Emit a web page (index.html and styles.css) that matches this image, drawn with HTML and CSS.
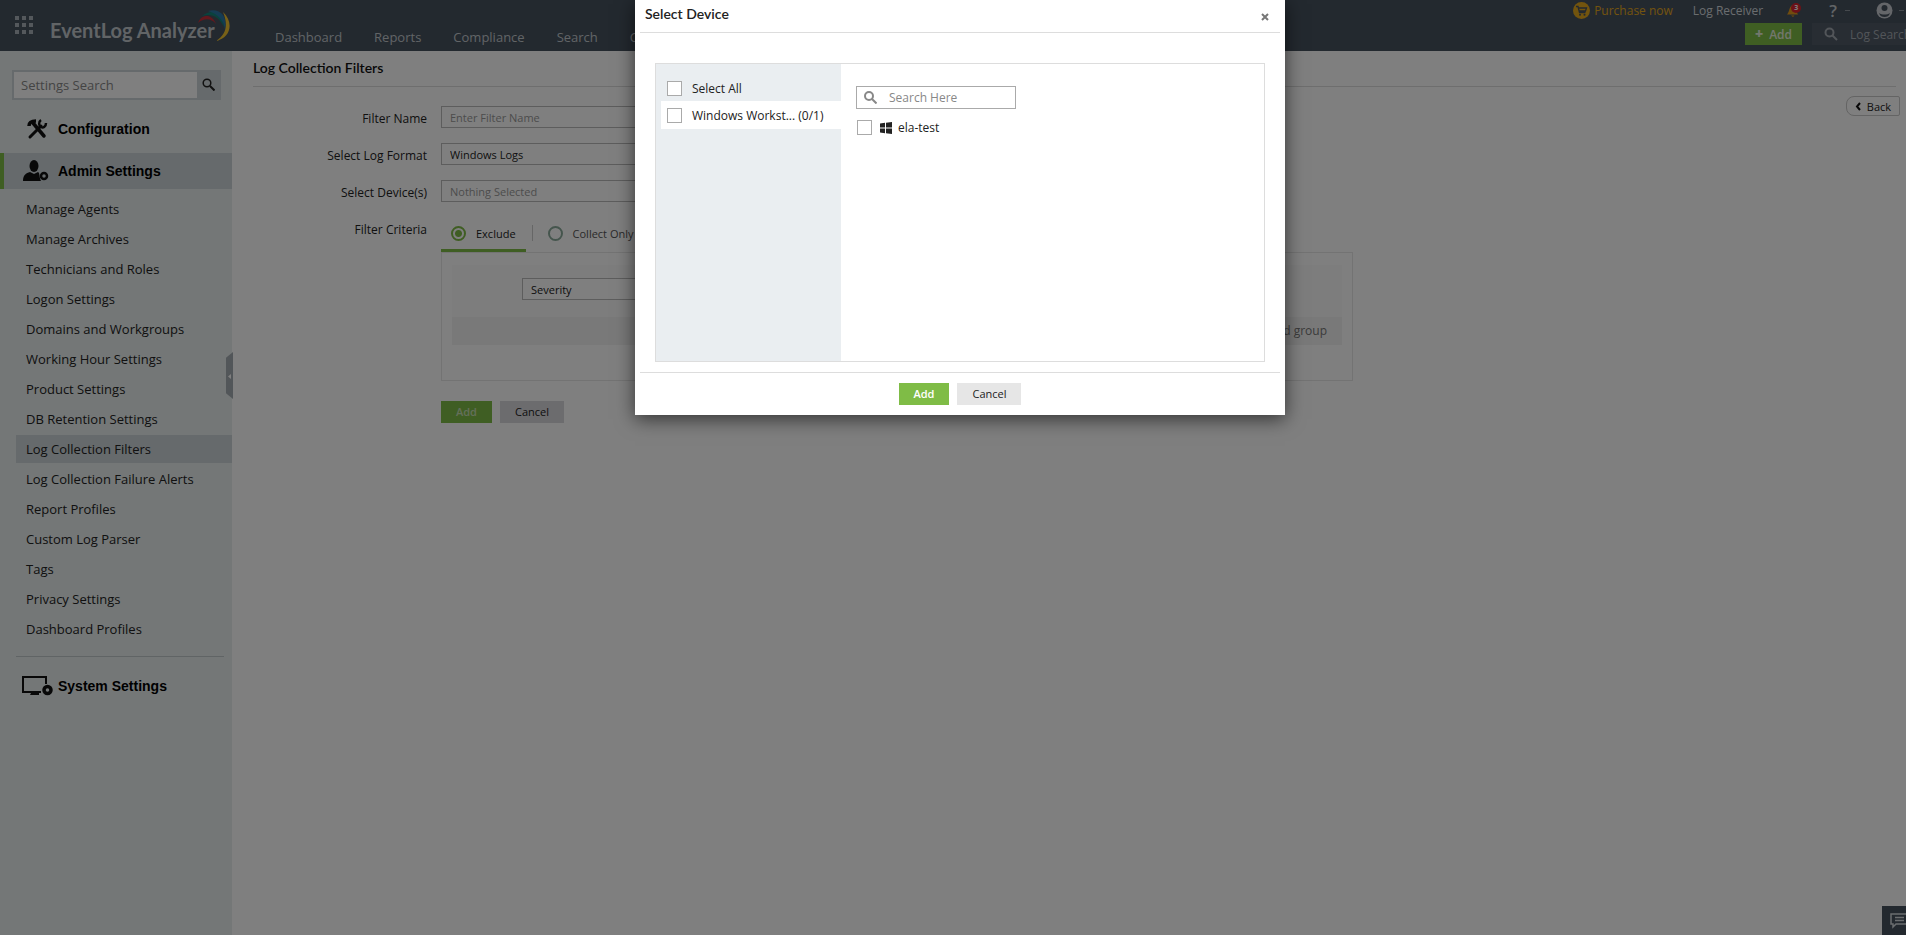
FILE: index.html
```html
<!DOCTYPE html>
<html lang="en">
<head>
    <meta charset="UTF-8">
    <meta name="viewport" content="width=device-width, initial-scale=1.0">
    <title>EventLog Analyzer - Log Collection Filters</title>
    <link rel="stylesheet" href="styles.css">
</head>
<body>
    <header class="header">
        <div class="brand">
            <svg class="apps-icon" width="19" height="19" viewBox="0 0 19 19" fill="#a9b0b8">
                <path d="M0 0h4v4H0zM7 0h4v4H7zM14 0h4v4h-4zM0 7h4v4H0zM7 7h4v4H7zM14 7h4v4h-4zM0 14h4v4H0zM7 14h4v4H7zM14 14h4v4h-4z"/>
            </svg>
            <a class="logo" href="#">EventLog Analyzer</a>
            <svg class="swoosh" width="36" height="34" viewBox="0 0 36 34">
                <path d="M1 13C4 4 15 3 19 14C14 8 7 8 1 13z" fill="#c4303a"/>
                <path d="M5 6C15-2 26 2 27 17C22 7 15 3 5 6z" fill="#12857a"/>
                <path d="M11 1C23-2 31 6 28 20C27 10 21 4 11 1z" fill="#2a78a8"/>
                <path d="M26 2C37 12 34 28 19 31C30 24 31 14 26 2z" fill="#f0c330"/>
            </svg>
        </div>
        <nav class="nav">
            <a href="#">Dashboard</a>
            <a href="#">Reports</a>
            <a href="#">Compliance</a>
            <a href="#">Search</a>
            <a href="#">Correlation</a>
        </nav>
        <div class="tools">
            <div class="tools-top">
                <a class="purchase" href="#">
                    <svg width="17" height="17" viewBox="0 0 17 17">
                        <circle cx="8.500" cy="8.500" r="8.500" fill="#e5a81c"/>
                        <path d="M3 4.500h2l1.500 6h6M5.500 6h8l-1 3H6.200" fill="none" stroke="#46525f" stroke-width="1.300"/>
                        <circle cx="7" cy="12.800" r="1" fill="#46525f"/>
                        <circle cx="11.500" cy="12.800" r="1" fill="#46525f"/>
                    </svg>
                    <span>Purchase now</span>
                </a>
                <a class="receiver" href="#">Log Receiver</a>
                <a class="bell" href="#" aria-label="Notifications">
                    <svg width="14" height="15" viewBox="0 0 14 15">
                        <path d="M6 2C2 3 3 8 0 11.500h11C9 8 9.500 3 6 2z" fill="#e59a1c"/>
                        <path d="M4 12.500h3.500L6 14z" fill="#e59a1c"/>
                        <circle cx="9" cy="5" r="5" fill="#d9232e"/>
                    </svg>
                    <span class="badge">3</span>
                </a>
                <a class="help" href="#">?<i class="dash"></i></a>
                <a class="user" href="#" aria-label="Account">
                    <svg width="17" height="17" viewBox="0 0 17 17">
                        <circle cx="8.500" cy="8.500" r="8" fill="#c8ccd2"/>
                        <circle cx="8.500" cy="6" r="3" fill="#46525f"/>
                        <path d="M3 11c3 2 8 2 11 0c-1 3-3 4-5.500 4S4 14 3 11z" fill="#46525f"/>
                    </svg>
                    <i class="dash"></i>
                </a>
            </div>
            <div class="tools-bottom">
                <button class="btn-new" type="button"><b>+</b>Add</button>
                <label class="log-search">
                    <svg width="14" height="14" viewBox="0 0 14 14" fill="none" stroke="#a5abb2" stroke-width="2">
                        <circle cx="5.500" cy="5.500" r="4"/><path d="M8.500 8.500l4.500 4.500"/>
                    </svg>
                    <input type="text" placeholder="Log Search" aria-label="Log Search">
                </label>
            </div>
        </div>
    </header>

    <div class="page">
        <aside class="sidebar">
            <form class="side-search">
                <input type="text" placeholder="Settings Search" aria-label="Settings Search">
                <button type="button" aria-label="Search">
                    <svg width="13" height="13" viewBox="0 0 13 13" fill="none" stroke="#222" stroke-width="1.500">
                        <circle cx="5" cy="5" r="3.800"/><path d="M8 8l4.500 4.500" stroke-width="2"/>
                    </svg>
                </button>
            </form>
            <a class="section config" href="#">
                <svg width="30" height="22" viewBox="0 0 30 22">
                    <g stroke="#111" fill="none" stroke-linecap="round">
                        <path d="M10 5l11 13" stroke-width="3.500"/>
                        <path d="M7 19L18 8" stroke-width="3"/>
                        <path d="M6 8c0-3 2-5 7-5" stroke-width="3.500" stroke-linecap="butt"/>
                        <path d="M18 2c-3 2-2 6 0 7s5 0 5-4" stroke-width="2.500" stroke-linecap="butt"/>
                    </g>
                </svg>
                Configuration
            </a>
            <a class="section admin" href="#">
                <svg width="30" height="22" viewBox="0 0 30 22">
                    <ellipse cx="11" cy="6" rx="4.500" ry="6" fill="#111"/>
                    <path d="M0 21c0-6 3-8 7-9l4 2 4-2c2 1 1 5 3 9z" fill="#111"/>
                    <circle cx="21" cy="16" r="3" fill="none" stroke="#111" stroke-width="2.500"/>
                </svg>
                Admin Settings
            </a>
            <ul class="menu">
                <li><a href="#">Manage Agents</a></li>
                <li><a href="#">Manage Archives</a></li>
                <li><a href="#">Technicians and Roles</a></li>
                <li><a href="#">Logon Settings</a></li>
                <li><a href="#">Domains and Workgroups</a></li>
                <li><a href="#">Working Hour Settings</a></li>
                <li><a href="#">Product Settings</a></li>
                <li><a href="#">DB Retention Settings</a></li>
                <li><a class="active" href="#">Log Collection Filters</a></li>
                <li><a href="#">Log Collection Failure Alerts</a></li>
                <li><a href="#">Report Profiles</a></li>
                <li><a href="#">Custom Log Parser</a></li>
                <li><a href="#">Tags</a></li>
                <li><a href="#">Privacy Settings</a></li>
                <li><a href="#">Dashboard Profiles</a></li>
            </ul>
            <a class="section system" href="#">
                <svg width="32" height="22" viewBox="0 0 32 22">
                    <path d="M25 9V2H2v15h18" fill="none" stroke="#111" stroke-width="2"/>
                    <path d="M10 18h8v2H9z" fill="#111"/>
                    <circle cx="26.500" cy="15" r="3.500" fill="none" stroke="#111" stroke-width="3.500"/>
                </svg>
                System Settings
            </a>
            <button class="collapse" type="button" aria-label="Collapse">
                <svg width="3" height="5" viewBox="0 0 3 5"><path d="M3 0v5L0 2.500z" fill="#fff"/></svg>
            </button>
        </aside>

        <main class="content">
            <h1>Log Collection Filters</h1>
            <div class="back-row">
                <button class="back" type="button">
                    <svg width="6" height="9" viewBox="0 0 6 9" fill="none" stroke="#111" stroke-width="2"><path d="M5 1L2 4.500L5 8"/></svg>
                    Back
                </button>
            </div>
            <form class="filter-form">
                <label for="filter-name">Filter Name</label>
                <input class="field" id="filter-name" type="text" placeholder="Enter Filter Name">

                <label for="log-format">Select Log Format</label>
                <select class="field" id="log-format"><option>Windows Logs</option></select>

                <label for="devices">Select Device(s)</label>
                <input class="field" id="devices" type="text" placeholder="Nothing Selected" readonly>

                <span class="criteria-label">Filter Criteria</span>
                <div class="criteria">
                    <div class="tabs">
                        <label class="tab selected"><input type="radio" name="mode" checked>Exclude</label>
                        <label class="tab"><input type="radio" name="mode">Collect Only</label>
                    </div>
                    <div class="box">
                        <div class="rule">
                            <select class="field" aria-label="Field"><option>Severity</option></select>
                        </div>
                        <div class="group"><a href="#">Add group</a></div>
                    </div>
                    <div class="actions">
                        <button class="btn btn-green" type="button">Add</button>
                        <button class="btn btn-grey" type="button">Cancel</button>
                    </div>
                </div>
            </form>
        </main>
    </div>

    <button class="chat" type="button" aria-label="Chat">
        <svg width="18" height="16" viewBox="0 0 18 16" fill="none" stroke="#d5dade" stroke-width="1.500">
            <path d="M1 1h16v10H6l-3 3v-3H1zM5 4.500h9M5 7.500h9"/>
        </svg>
    </button>

    <div class="overlay">
        <div class="dialog" role="dialog" aria-labelledby="dialog-title">
            <div class="dialog-head">
                <h2 id="dialog-title">Select Device</h2>
                <button class="close" type="button" aria-label="Close">
                    <svg width="8" height="8" viewBox="0 0 8 8" stroke="#777" stroke-width="2"><path d="M1 1l6 6M7 1L1 7"/></svg>
                </button>
            </div>
            <div class="picker">
                <div class="groups">
                    <label class="check"><input type="checkbox">Select All</label>
                    <label class="check current"><input type="checkbox">Windows Workst... (0/1)</label>
                </div>
                <div class="devices">
                    <div class="device-search">
                        <svg width="13" height="13" viewBox="0 0 13 13" fill="none" stroke="#888" stroke-width="2">
                            <circle cx="5" cy="5" r="4"/><path d="M8 8l4.500 4.500"/>
                        </svg>
                        <input type="text" placeholder="Search Here" aria-label="Search Here">
                    </div>
                    <label class="check">
                        <input type="checkbox">
                        <svg width="12" height="12" viewBox="0 0 12 12" fill="#222">
                            <path d="M0 1.500l5-.7v4.700H0zM6 .7L12 0v5.500H6zM0 6.500h5v4.700l-5-.7zM6 6.500h6V12l-6-.7z"/>
                        </svg>
                        ela-test
                    </label>
                </div>
            </div>
            <div class="dialog-foot">
                <button class="btn btn-green" type="button">Add</button>
                <button class="btn btn-grey" type="button">Cancel</button>
            </div>
        </div>
    </div>
</body>
</html>
```
FILE: styles.css
```css
* {
    box-sizing: border-box;
}

body {
    margin: 0;
    min-height: 100vh;
    display: flex;
    flex-direction: column;
    overflow: hidden;
    background-color: #fff;
    font-family: "Open Sans", sans-serif;
    font-size: 12px;
    color: #222;
}

a {
    color: inherit;
    text-decoration: none;
}

button,
input,
select {
    font: inherit;
    color: inherit;
    margin: 0;
}

button {
    border: none;
    padding: 0;
    cursor: pointer;
}

svg {
    flex: none;
}

/* header */
.header {
    display: flex;
    height: 51px;
    background-color: #46525f;
    color: #c3c8cd;
}

.brand {
    display: flex;
    width: 275px;
    padding: 10px 0 0 15px;
}

.apps-icon {
    margin-top: 6px;
}

.logo {
    margin: 8px 0 0 16px;
    font-family: Lato, sans-serif;
    font-size: 20px;
    font-weight: bold;
    line-height: 24px;
}

.swoosh {
    margin-left: -18px;
}

.nav {
    display: flex;
    gap: 32px;
    padding-top: 27px;
    font-size: 13px;
    line-height: 20px;
}

.tools {
    margin-left: auto;
    margin-right: -14px;
}

.tools-top {
    display: flex;
    align-items: center;
    justify-content: flex-end;
    height: 20px;
}

.purchase {
    display: flex;
    align-items: center;
    gap: 4px;
    color: #e5a81c;
}

.receiver {
    margin-left: 20px;
    color: #d5dade;
}

.bell {
    position: relative;
    margin-left: 24px;
    height: 15px;
}

.badge {
    position: absolute;
    left: 7px;
    top: 1px;
    font-size: 7px;
    line-height: 8px;
    font-weight: bold;
    color: #fff;
}

.help {
    display: flex;
    align-items: center;
    gap: 8px;
    margin-left: 28px;
    font-size: 17px;
    font-weight: 600;
}

.dash {
    width: 5px;
    height: 1px;
    background-color: #8b939b;
}

.user {
    display: flex;
    align-items: center;
    gap: 6px;
    margin: 0 16px 0 26px;
}

.tools-bottom {
    display: flex;
    justify-content: flex-end;
    align-items: center;
    gap: 10px;
    margin-top: 3px;
}

.btn-new {
    width: 57px;
    height: 22px;
    background-color: #7fbc46;
    color: #e5efdb;
    font-size: 12px;
    font-weight: 600;
    line-height: 22px;
}

.btn-new b {
    margin-right: 6px;
    font-size: 14px;
}

.log-search {
    display: flex;
    align-items: center;
    gap: 12px;
    width: 108px;
    height: 22px;
    padding-left: 12px;
    background-color: #505a67;
}

.log-search input {
    width: 80px;
    padding: 0;
    border: none;
    background: none;
}

.log-search input::placeholder {
    color: #a5abb2;
}

/* page */
.page {
    flex: 1;
    display: flex;
}

.sidebar {
    position: relative;
    width: 232px;
    padding-top: 19px;
    background-color: #e8eeee;
}

.side-search {
    display: flex;
    height: 30px;
    margin: 0 11px 0 12px;
    border: 2px solid #ccd4d8;
    background-color: #fff;
}

.side-search input {
    flex: 1;
    min-width: 0;
    padding: 0 7px;
    border: none;
    background: none;
    font-size: 13px;
}

.side-search input::placeholder {
    color: #888;
}

.side-search button {
    width: 22px;
    background-color: #ccd4d8;
    line-height: 10px;
}

.section {
    display: flex;
    align-items: center;
    gap: 5px;
    height: 36px;
    padding-left: 23px;
    color: #000;
    font-family: "Liberation Sans", Arial, sans-serif;
    font-size: 14px;
    font-weight: bold;
}

.config {
    margin: 11px 0 6px;
}

.admin {
    padding-left: 19px;
    border-left: 4px solid #7fbc46;
    background-color: #ccd4d8;
}

.menu {
    margin: 6px 0 0;
    padding: 0 0 11px;
    list-style: none;
    font-size: 13px;
}

.menu a {
    display: block;
    margin: 0 0 2px 16px;
    padding-left: 10px;
    line-height: 28px;
}

.menu .active {
    background-color: #ccd4d8;
}

.system {
    margin: 0 8px 0 16px;
    height: 58px;
    padding-left: 5px;
    border-top: 1px solid #c0c8ca;
}

.collapse {
    position: absolute;
    right: -1px;
    top: 301px;
    width: 7px;
    height: 47px;
    background-color: #a5acb2;
    clip-path: polygon(0 12%, 100% 0, 100% 100%, 0 88%);
    line-height: 5px;
}

.content {
    flex: 1;
    padding: 0 10px 0 21px;
}

h1 {
    margin: 0;
    height: 36px;
    border-bottom: 1px solid #ddd;
    font-family: Lato, sans-serif;
    font-size: 14px;
    font-weight: 600;
    line-height: 34px;
    color: #111;
}

.back-row {
    display: flex;
    justify-content: flex-end;
    height: 19px;
    padding-top: 9px;
    margin-right: -4px;
}

.back {
    display: flex;
    align-items: center;
    justify-content: center;
    gap: 6px;
    width: 54px;
    height: 20px;
    border: 1px solid #c8c8c8;
    border-radius: 8px 2px 2px 8px;
    background-color: #fff;
    font-size: 11px;
}

.filter-form {
    display: grid;
    grid-template-columns: 174px 912px;
    column-gap: 14px;
    row-gap: 15px;
}

.filter-form > label,
.criteria-label {
    padding-top: 3px;
    text-align: right;
    line-height: 19px;
}

.field {
    width: 320px;
    height: 22px;
    padding: 0 8px;
    border: 1px solid #bbb;
    border-radius: 0;
    background-color: #fff;
    font-size: 11px;
    appearance: none;
}

.field::placeholder {
    color: #999;
}

.tabs {
    display: flex;
    height: 35px;
}

.tab {
    display: flex;
    align-items: center;
    gap: 10px;
    padding: 0 10px;
    font-size: 11px;
    color: #555;
}

.tab + .tab {
    padding: 0 0 3px 22px;
}

.tab input {
    appearance: none;
    width: 15px;
    height: 15px;
    border: 2px solid #8bab9b;
    border-radius: 50%;
}

.selected {
    border-bottom: 3px solid #7fbc46;
    color: #222;
}

.selected input {
    border-color: #7fbc46;
    background: radial-gradient(circle, #7fbc46 3px, transparent 4px);
}

.tab + .tab::before {
    content: "";
    width: 1px;
    height: 16px;
    margin-left: -16px;
    margin-right: 5px;
    background-color: #ccc;
}

.box {
    height: 129px;
    padding: 12px 10px;
    border: 1px solid #e6e6e6;
}

.rule {
    height: 52px;
    padding: 13px 70px;
    background-color: #fafafa;
}

.group {
    padding-right: 15px;
    background-color: #f2f2f2;
    text-align: right;
    font-size: 12px;
    line-height: 28px;
    color: #777;
}

.actions {
    display: flex;
    gap: 8px;
    margin-top: 20px;
}

.btn {
    height: 22px;
    padding: 0 15px;
    font-size: 11px;
    line-height: 22px;
}

.btn-green {
    background-color: #7fbc46;
    color: #fff;
    font-weight: 600;
}

.btn-grey {
    background-color: #e6e6e6;
}

.actions .btn-green {
    color: #c8dfb4;
}

.actions .btn-grey {
    background-color: #d8d8dc;
}

.chat {
    position: absolute;
    right: 0;
    bottom: 0;
    width: 24px;
    height: 29px;
    padding: 4px 0 0 8px;
    overflow: hidden;
    background-color: #46525f;
}

.overlay {
    position: absolute;
    inset: 0 -14px 0 0;
    background-color: rgba(0, 0, 0, 0.5);
}

.dialog {
    width: 650px;
    margin: 0 auto;
    padding: 0 5px;
    background-color: #fff;
    box-shadow: 0 4px 18px rgba(0, 0, 0, 0.6);
}

.dialog-head {
    display: flex;
    justify-content: space-between;
    height: 33px;
    padding: 0 11px 0 5px;
    border-bottom: 1px solid #ddd;
}

h2 {
    margin: 0;
    font-family: Lato, sans-serif;
    font-size: 14px;
    font-weight: 600;
    line-height: 28px;
}

.close {
    background: none;
}

.picker {
    display: flex;
    height: 299px;
    margin: 30px 15px 10px;
    border: 1px solid #ddd;
}

.groups {
    width: 185px;
    padding: 12px 0 0 5px;
    background-color: #eaeef1;
}

.check {
    display: flex;
    align-items: center;
    gap: 10px;
    height: 25px;
    padding-left: 6px;
}

.current {
    height: 28px;
    background-color: #fff;
}

.check input {
    appearance: none;
    width: 15px;
    height: 15px;
    border: 1px solid #aaa;
    background-color: #fff;
}

.devices {
    padding: 22px 15px;
}

.device-search {
    display: flex;
    align-items: center;
    gap: 12px;
    width: 160px;
    height: 23px;
    margin-bottom: 6px;
    padding-left: 7px;
    border: 1px solid #aaa;
}

.device-search input {
    width: 110px;
    padding: 0;
    border: none;
    outline: none;
}

.device-search input::placeholder {
    color: #888;
}

.devices .check {
    gap: 8px;
    padding-left: 1px;
}

.devices .check svg {
    margin-right: -2px;
}

.dialog-foot {
    display: flex;
    justify-content: center;
    gap: 8px;
    padding: 10px 0;
    border-top: 1px solid #ddd;
}
```
